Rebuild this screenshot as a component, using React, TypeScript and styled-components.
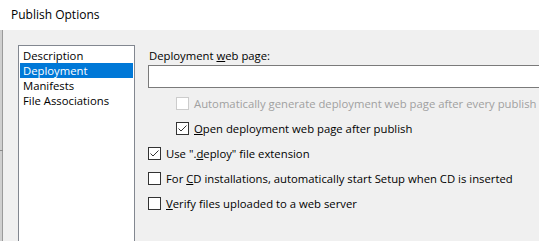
import React from "react";
import styled, { createGlobalStyle } from "styled-components";

const Global = createGlobalStyle`
  html, body { margin: 0; padding: 0; overflow: hidden; background: #ffffff; }
  body { font-family: "Segoe UI", "Open Sans", "Noto Sans", sans-serif; font-size: 11.3px; color: #000; }
`;

const Window = styled.div`
  width: 539px;
  height: 241px;
  display: flex;
  flex-direction: column;
  overflow: hidden;
`;

const TitleBar = styled.div`
  height: 30px;
  flex: none;
  background: #ffffff;
  padding-left: 11px;
  display: flex;
  align-items: center;
  font-size: 12px;
  line-height: 15px;
  padding-bottom: 1px;
  box-sizing: border-box;
`;

const Body = styled.div`
  flex: 1;
  display: flex;
  min-height: 0;
`;

const LeftEdge = styled.div`
  width: 2px;
  flex: none;
  background: #cfcfcf;
  border-right: 1px solid #9a9a9a;
  position: relative;
  &::after {
    content: "";
    position: absolute;
    left: 0;
    top: 120px;
    width: 3px;
    height: 1px;
    background: #8a8a8a;
  }
`;

const Content = styled.div`
  flex: 1;
  background: #f0f0f0;
  display: flex;
  align-items: flex-start;
  padding: 15px 0 0 15px;
  gap: 13px;
  overflow: hidden;
`;

const ListBox = styled.div`
  width: 117px;
  height: 220px;
  flex: none;
  box-sizing: border-box;
  background: #ffffff;
  border: 1px solid #828790;
  padding: 2px 1px;
  display: flex;
  flex-direction: column;
`;

const ListItem = styled.div<{ $selected?: boolean }>`
  height: 15px;
  line-height: 15px;
  padding-left: 3px;
  white-space: nowrap;
  background: ${(p) => (p.$selected ? "#0078d7" : "transparent")};
  color: ${(p) => (p.$selected ? "#ffffff" : "#000000")};
`;

const Panel = styled.div`
  width: 420px;
  flex: none;
  display: flex;
  flex-direction: column;
  padding-top: 3px;
`;

const Label = styled.div`
  height: 15px;
  line-height: 15px;
  padding-left: 1px;
  margin-bottom: 2px;
  white-space: nowrap;
`;

const TextBox = styled.div`
  height: 23px;
  box-sizing: border-box;
  background: #ffffff;
  border: 1px solid #7a7a7a;
  margin-bottom: 3px;
`;

const Row = styled.div<{ $indent?: boolean; $disabled?: boolean }>`
  height: 25px;
  display: flex;
  align-items: center;
  padding-left: ${(p) => (p.$indent ? "28px" : "0")};
  color: ${(p) => (p.$disabled ? "#a0a0a0" : "#000000")};
  white-space: nowrap;
`;

const Box = styled.span<{ $disabled?: boolean }>`
  width: 13px;
  height: 13px;
  box-sizing: border-box;
  flex: none;
  background: #ffffff;
  border: 1px solid ${(p) => (p.$disabled ? "#cccccc" : "#333333")};
  margin-right: 5px;
  display: flex;
  align-items: center;
  justify-content: center;
  svg { display: block; }
`;

const Key = styled.span`
  text-decoration: underline;
  text-underline-offset: 1px;
`;

const Check = () => (
  <svg width="11" height="11" viewBox="0 0 11 11">
    <polyline points="1.5,5.5 4,8 9.5,2.5" fill="none" stroke="#333333" strokeWidth="1" />
  </svg>
);

const CheckBox: React.FC<{ checked?: boolean; disabled?: boolean }> = ({ checked, disabled }) => (
  <Box $disabled={disabled}>{checked ? <Check /> : null}</Box>
);

export default function App() {
  return (
    <Window>
      <Global />
      <TitleBar>Publish Options</TitleBar>
      <Body>
        <LeftEdge />
        <Content>
          <ListBox>
            <ListItem>Description</ListItem>
            <ListItem $selected>Deployment</ListItem>
            <ListItem>Manifests</ListItem>
            <ListItem>File Associations</ListItem>
          </ListBox>
          <Panel>
            <Label>
              Deployment <Key>w</Key>eb page:
            </Label>
            <TextBox />
            <Row $indent $disabled>
              <CheckBox disabled />
              <span>
                Automatically <Key>g</Key>enerate deployment web page after every publish
              </span>
            </Row>
            <Row $indent>
              <CheckBox checked />
              <span>
                <Key>O</Key>pen deployment web page after publish
              </span>
            </Row>
            <Row>
              <CheckBox checked />
              <span>
                Use ".<Key>d</Key>eploy" file extension
              </span>
            </Row>
            <Row>
              <CheckBox />
              <span>
                For <Key>C</Key>D installations, automatically start Setup when CD is inserted
              </span>
            </Row>
            <Row>
              <CheckBox />
              <span>
                <Key>V</Key>erify files uploaded to a web server
              </span>
            </Row>
          </Panel>
        </Content>
      </Body>
    </Window>
  );
}
